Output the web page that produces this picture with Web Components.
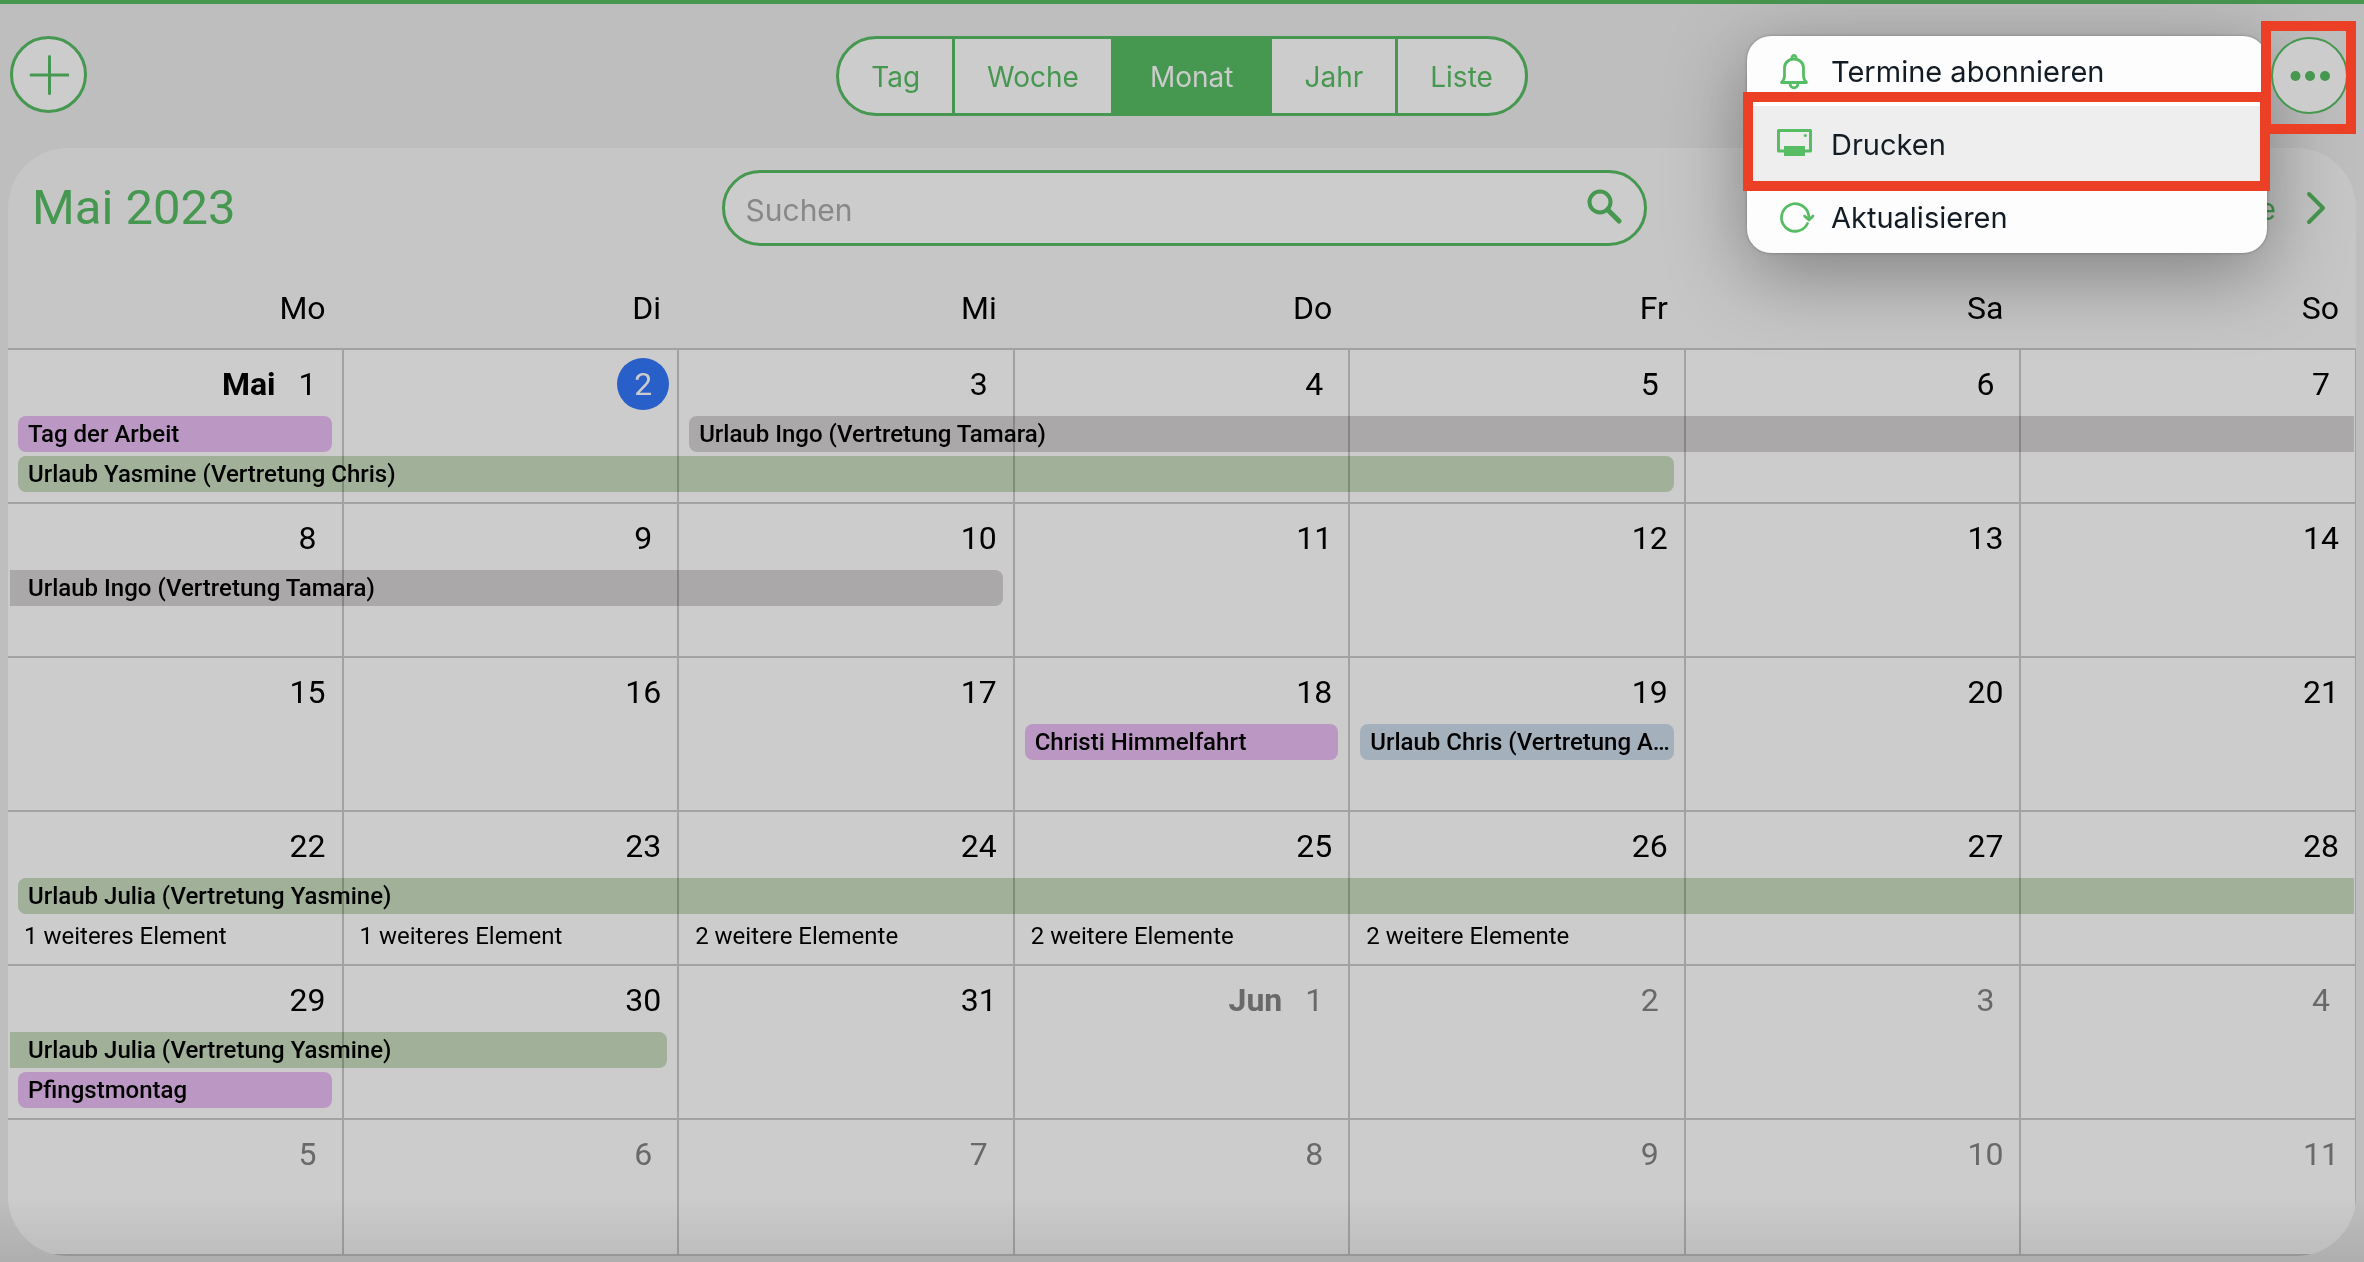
<!DOCTYPE html>
<html lang="de">
<head>
<meta charset="utf-8">
<title>Kalender</title>
<style>
  :root {
    --green: #469750;
    --green-bright: #57bd64;
    --page: #bebebe;
    --card: #c6c6c6;
    --field: #cccccc;
    --line: #a2a2a2;
    --mark: #eb4026;
    --ui-font: Inter, "Liberation Sans", sans-serif;
  }

  body {
    margin: 0;
    background: var(--page);
    color: #000;
    font-family: Roboto, "Liberation Sans", sans-serif;
  }
</style>
</head>
<body>
<calendar-app>
  <calendar-toolbar slot="toolbar">
    <view-switch></view-switch>
    <action-menu slot="menu"></action-menu>
  </calendar-toolbar>
  <calendar-header slot="header" month="Mai 2023"></calendar-header>
  <calendar-month></calendar-month>
</calendar-app>

<script>
const html = String.raw;

function makeTemplate(markup) {
  const template = document.createElement("template");
  template.innerHTML = markup;
  return template;
}

const base = `
  *, ::after, ::before { box-sizing: border-box; }
  button, input { font: inherit; color: inherit; margin: 0; }
  button { cursor: pointer; }
  a { color: inherit; text-decoration: none; }
  svg { display: block; fill: none; stroke: currentColor; stroke-linecap: round; stroke-linejoin: round; }
`;

/* ---------- page shell ---------- */

const appTemplate = makeTemplate(html`
<style>
  ${base}
  :host {
    display: flex;
    flex-direction: column;
    box-sizing: border-box;
    min-height: 100vh;
    padding-bottom: 6px;
    border-top: 4px solid var(--green);
  }

  main {
    flex: 1;
    display: flex;
    flex-direction: column;
    margin: 0 8px;
    border-radius: 60px;
    overflow: hidden;
    background: var(--card);
  }

  .shade {
    position: fixed;
    inset: auto 0 0 0;
    height: 64px;
    background: linear-gradient(rgba(0, 0, 0, 0), rgba(0, 0, 0, 0.08));
    pointer-events: none;
  }
</style>
<slot name="toolbar"></slot>
<main>
  <slot name="header"></slot>
  <slot></slot>
</main>
<div class="shade"></div>`);

class CalendarApp extends HTMLElement {
  constructor() {
    super();
    this.attachShadow({ mode: "open" }).append(appTemplate.content.cloneNode(true));
  }
}

/* ---------- top bar ---------- */

const toolbarTemplate = makeTemplate(html`
<style>
  ${base}
  :host {
    position: relative;
    z-index: 1;
    display: grid;
    grid-template-columns: 1fr auto 1fr;
    align-items: start;
    padding: 32px 10px;
    color: var(--green);
  }

  .round {
    width: 77px;
    height: 77px;
    padding: 0;
    border: 3px solid var(--green);
    border-radius: 50%;
    background: var(--field);
  }

  .round svg { margin: auto; }

  .more {
    position: relative;
    z-index: 3;
    justify-self: end;
    margin: 1px 6px 0 0;
    border-width: 2px;
  }

  /* highlight frame round the button */
  .more::after {
    content: "";
    position: absolute;
    inset: -18px -10px -22px -12px;
    border: 10px solid var(--mark);
  }
</style>
<button class="round" aria-label="Neuer Termin">
  <svg width="40" height="40" viewBox="0 0 40 40" stroke-width="3"><path d="M20.500 1.500V38.500M2 20H39"/></svg>
</button>
<slot></slot>
<button class="round more" aria-label="Mehr">
  <svg width="40" height="12" viewBox="0 0 40 12" style="fill: currentColor; stroke: none">
    <circle cx="5.500" cy="6" r="5"/><circle cx="20" cy="6" r="5"/><circle cx="35" cy="6" r="5"/>
  </svg>
</button>
<slot name="menu"></slot>`);

class CalendarToolbar extends HTMLElement {
  constructor() {
    super();
    this.attachShadow({ mode: "open" }).append(toolbarTemplate.content.cloneNode(true));
  }
}

const switchTemplate = makeTemplate(html`
<style>
  ${base}
  :host {
    display: flex;
    font: 28px/34px var(--ui-font);
    color: var(--green);
  }

  button {
    height: 80px;
    padding: 2px 32px 0;
    border: 3px solid var(--green);
    background: var(--field);
  }

  button + button { margin-left: -3px; }
  button:first-of-type { border-radius: 40px 0 0 40px; }
  button:last-of-type { border-radius: 0 40px 40px 0; }

  button[aria-pressed="true"] {
    position: relative;
    padding: 2px 36px 0;
    background: var(--green);
    color: var(--field);
  }
</style>`);

class ViewSwitch extends HTMLElement {
  constructor() {
    super();
    this.attachShadow({ mode: "open" }).append(switchTemplate.content.cloneNode(true));
    ["Tag", "Woche", "Monat", "Jahr", "Liste"].forEach(name => {
      const button = document.createElement("button");
      button.textContent = name;
      button.setAttribute("aria-pressed", name === "Monat");
      button.addEventListener("click", () => this.select(button));
      this.shadowRoot.append(button);
    });
  }

  select(button) {
    this.shadowRoot.querySelectorAll("button").forEach(b => {
      b.setAttribute("aria-pressed", b === button);
    });
  }
}

/* ---------- open menu ---------- */

const menuTemplate = makeTemplate(html`
<style>
  ${base}
  :host {
    position: absolute;
    z-index: 2;
    top: 32px;
    right: 97px;
    width: 520px;
    display: grid;
    grid-template-rows: 70px 76px 71px;
    border-radius: 24px;
    background: #fdfdfd;
    box-shadow: 0 0 3px rgba(0, 0, 0, 0.3), 0 20px 80px rgba(0, 0, 0, 0.36);
    font: 29px/34px var(--ui-font);
    color: #131b24;
  }

  button {
    position: relative;
    display: flex;
    align-items: center;
    gap: 16px;
    padding: 1px 28px 0;
    border: 0;
    background: none;
    text-align: left;
  }

  svg { color: var(--green-bright); }

  .active { background: #eeeeee; }

  /* highlight frame round the entry */
  .active::after {
    content: "";
    position: absolute;
    inset: -14px -3px -9px -4px;
    border: 10px solid var(--mark);
  }

  .active::before {
    content: "";
    position: absolute;
    inset: -4px 0 auto 0;
    height: 4px;
    background: #fff;
  }
</style>
<button>
  <svg width="40" height="40" viewBox="0 0 40 40" stroke-width="2.800">
    <path d="M6.500 30.500h25c-2-1.800-3-4-3-7v-7.500c0-5-4-9-9.500-9s-9.500 4-9.500 9v7.500c0 3-1 5.200-3 7z"/>
    <path d="M17 6c-.6-3.400 4.600-3.400 4 0M15 31c0 6.500 8 6.500 8 0"/>
  </svg>
  Termine abonnieren
</button>
<button class="active">
  <svg width="40" height="40" viewBox="0 0 40 40" stroke-width="3">
    <path d="M3.500 5.500h32v20.500h-32z"/>
    <path d="M9 21h21v10H9z" style="fill: currentColor; stroke: none"/>
    <circle cx="30.300" cy="10.500" r="1.500" style="fill: currentColor; stroke: none"/>
  </svg>
  Drucken
</button>
<button>
  <svg width="40" height="40" viewBox="0 0 40 40" stroke-width="2.800">
    <path d="M32.500 25.500a13.700 13.700 0 1 1 1.300-7.500v3M29.500 18l4.500 4 4-4"/>
  </svg>
  Aktualisieren
</button>`);

class ActionMenu extends HTMLElement {
  constructor() {
    super();
    this.attachShadow({ mode: "open" }).append(menuTemplate.content.cloneNode(true));
  }
}

/* ---------- title, search, paging ---------- */

const headerTemplate = makeTemplate(html`
<style>
  ${base}
  :host {
    display: grid;
    grid-template-columns: 1fr minmax(0, 925px) 1fr;
    align-items: start;
    padding: 22px 18px 20px 22px;
    color: var(--green);
  }

  h1 {
    margin: 10px 0 0 2px;
    font-size: 49px;
    font-weight: 400;
    line-height: 56px;
  }

  .search {
    display: flex;
    align-items: center;
    height: 76px;
    padding: 0 22px 0 21px;
    border: 3px solid var(--green);
    border-radius: 38px;
    background: var(--field);
    font: 30px/36px var(--ui-font);
  }

  input {
    flex: 1;
    min-width: 0;
    padding: 3px 0 0;
    border: 0;
    outline: 0;
    background: none;
    color: #000;
  }

  input::placeholder { color: #888; opacity: 1; }

  .search button {
    padding: 0 0 4px;
    border: 0;
    background: none;
  }

  nav {
    justify-self: end;
    display: flex;
    align-items: center;
    height: 76px;
    font: 30px/36px var(--ui-font);
  }

  nav button {
    padding: 0 12px;
    border: 0;
    background: none;
  }

  nav .today { padding: 2px 18px 0; }
</style>
<h1></h1>
<form class="search">
  <input type="text" placeholder="Suchen" aria-label="Suchen">
  <button type="button" aria-label="Suche starten">
    <svg width="36" height="36" viewBox="0 0 36 36" stroke-width="4" stroke-linecap="butt">
      <circle cx="14" cy="14" r="10.500"/><path d="M21.500 21.500L33 33" stroke-width="5"/>
    </svg>
  </button>
</form>
<nav>
  <button aria-label="Zurück"><svg width="20" height="34" viewBox="0 0 20 34" stroke-width="4"><path d="M17 3L3 17l14 14"/></svg></button>
  <button class="today">Heute</button>
  <button aria-label="Weiter"><svg width="20" height="34" viewBox="0 0 20 34" stroke-width="4"><path d="M3 3l14 14L3 31"/></svg></button>
</nav>`);

class CalendarHeader extends HTMLElement {
  constructor() {
    super();
    this.attachShadow({ mode: "open" }).append(headerTemplate.content.cloneNode(true));
  }

  connectedCallback() {
    this.shadowRoot.querySelector("h1").textContent = this.getAttribute("month");
  }
}

/* ---------- one event bar ---------- */

const eventTemplate = makeTemplate(html`
<style>
  ${base}
  /* the bar may run over several cells, so its width is counted in cells */
  :host {
    --left: 10px;
    --right: 12px;
    display: block;
    box-sizing: border-box;
    width: calc(var(--span, 1) * (100% + 2px) - var(--left) - var(--right));
    height: 36px;
    margin: 0 0 4px var(--left);
    padding: 0 2px 0 10px;
    border-radius: 8px;
    mix-blend-mode: multiply;
    font-size: 24px;
    font-weight: 500;
    line-height: 36px;
  }

  :host([kind="holiday"]) { background: #eabef5; }
  :host([kind="green"]) { background: #c9ddbf; }
  :host([kind="gray"]) { background: #d5d2d3; }
  :host([kind="blue"]) { background: #cddeec; }

  :host([from-before]) {
    --left: 2px;
    padding-left: 18px;
    border-top-left-radius: 0;
    border-bottom-left-radius: 0;
  }

  :host([goes-on]) {
    --right: 3px;
    border-top-right-radius: 0;
    border-bottom-right-radius: 0;
  }

  a {
    display: block;
    overflow: hidden;
    text-overflow: ellipsis;
    white-space: nowrap;
  }
</style>
<a href="#"><slot></slot></a>`);

class CalendarEvent extends HTMLElement {
  constructor() {
    super();
    this.attachShadow({ mode: "open" }).append(eventTemplate.content.cloneNode(true));
  }

  connectedCallback() {
    this.style.setProperty("--span", this.getAttribute("span") || 1);
  }
}

/* ---------- month table ---------- */

const monthTemplate = makeTemplate(html`
<style>
  ${base}
  :host {
    flex: 1;
    display: flex;
    flex-direction: column;
  }

  /* half of the last cell's border is cut off by the card */
  table {
    flex: 1;
    width: calc(100% + 1px);
    table-layout: fixed;
    border-collapse: separate;
    border-spacing: 0;
    font-size: 32px;
    line-height: 38px;
  }

  th {
    padding: 23px 18px 21px 0;
    border-bottom: 2px solid var(--line);
    font-weight: 400;
    text-align: right;
  }

  td {
    height: 154px;
    padding: 0;
    border: solid var(--line);
    border-width: 0 2px 2px 0;
    background: var(--field);
    vertical-align: top;
  }

  tr:last-child td { height: 136px; }

  .day {
    display: flex;
    justify-content: flex-end;
    align-items: center;
    padding: 8px 8px 6px 0;
  }

  .num {
    width: 52px;
    border-radius: 50%;
    line-height: 52px;
    text-align: center;
  }

  b { margin-right: 6px; }
  .today .num { background: #295fc9; color: var(--field); }
  .other { color: #696969; }

  .rest {
    display: block;
    padding-left: 16px;
    font-size: 24px;
    line-height: 36px;
  }
</style>
<table>
  <thead><tr></tr></thead>
  <tbody></tbody>
</table>`);

const events = {
  "5-1": `
    <calendar-event kind="holiday">Tag der Arbeit</calendar-event>
    <calendar-event kind="green" span="5">Urlaub Yasmine (Vertretung Chris)</calendar-event>`,
  "5-3": `<calendar-event kind="gray" span="5" goes-on>Urlaub Ingo (Vertretung Tamara)</calendar-event>`,
  "5-8": `<calendar-event kind="gray" span="3" from-before>Urlaub Ingo (Vertretung Tamara)</calendar-event>`,
  "5-18": `<calendar-event kind="holiday">Christi Himmelfahrt</calendar-event>`,
  "5-19": `<calendar-event kind="blue">Urlaub Chris (Vertretung Andrea)</calendar-event>`,
  "5-22": `<calendar-event kind="green" span="7" goes-on>Urlaub Julia (Vertretung Yasmine)</calendar-event>`,
  "5-29": `
    <calendar-event kind="green" span="2" from-before>Urlaub Julia (Vertretung Yasmine)</calendar-event>
    <calendar-event kind="holiday">Pfingstmontag</calendar-event>`
};

// entries that did not fit; the first slot of these days is taken by a running bar
const hidden = { "5-22": 1, "5-23": 1, "5-24": 2, "5-25": 2, "5-26": 2 };

class CalendarMonth extends HTMLElement {
  constructor() {
    super();
    this.attachShadow({ mode: "open" }).append(monthTemplate.content.cloneNode(true));
    this.shadowRoot.querySelector("thead tr").innerHTML =
      ["Mo", "Di", "Mi", "Do", "Fr", "Sa", "So"].map(d => `<th scope="col">${d}</th>`).join("");

    let rows = "";
    for (let week = 0; week < 6; week++) {
      rows += "<tr>";
      for (let i = 0; i < 7; i++) {
        rows += this.cell(new Date(2023, 4, 1 + week * 7 + i));
      }
      rows += "</tr>";
    }
    this.shadowRoot.querySelector("tbody").innerHTML = rows;
  }

  cell(date) {
    const month = date.getMonth() + 1;
    const day = date.getDate();
    const key = `${month}-${day}`;
    const names = { 5: "Mai", 6: "Jun" };
    const label = day === 1 ? `<b>${names[month]}</b>` : "";
    const state = key === "5-2" ? " today" : month !== 5 ? " other" : "";
    let rest = "";
    if (hidden[key]) {
      const space = events[key] ? "" : ` style="margin-top: 40px"`;
      const text = hidden[key] === 1 ? "1 weiteres Element" : `${hidden[key]} weitere Elemente`;
      rest = `<a href="#" class="rest"${space}>${text}</a>`;
    }
    return `<td><div class="day${state}">${label}<span class="num">${day}</span></div>${events[key] || ""}${rest}</td>`;
  }
}

customElements.define("calendar-app", CalendarApp);
customElements.define("calendar-toolbar", CalendarToolbar);
customElements.define("view-switch", ViewSwitch);
customElements.define("action-menu", ActionMenu);
customElements.define("calendar-header", CalendarHeader);
customElements.define("calendar-event", CalendarEvent);
customElements.define("calendar-month", CalendarMonth);
</script>
</body>
</html>
